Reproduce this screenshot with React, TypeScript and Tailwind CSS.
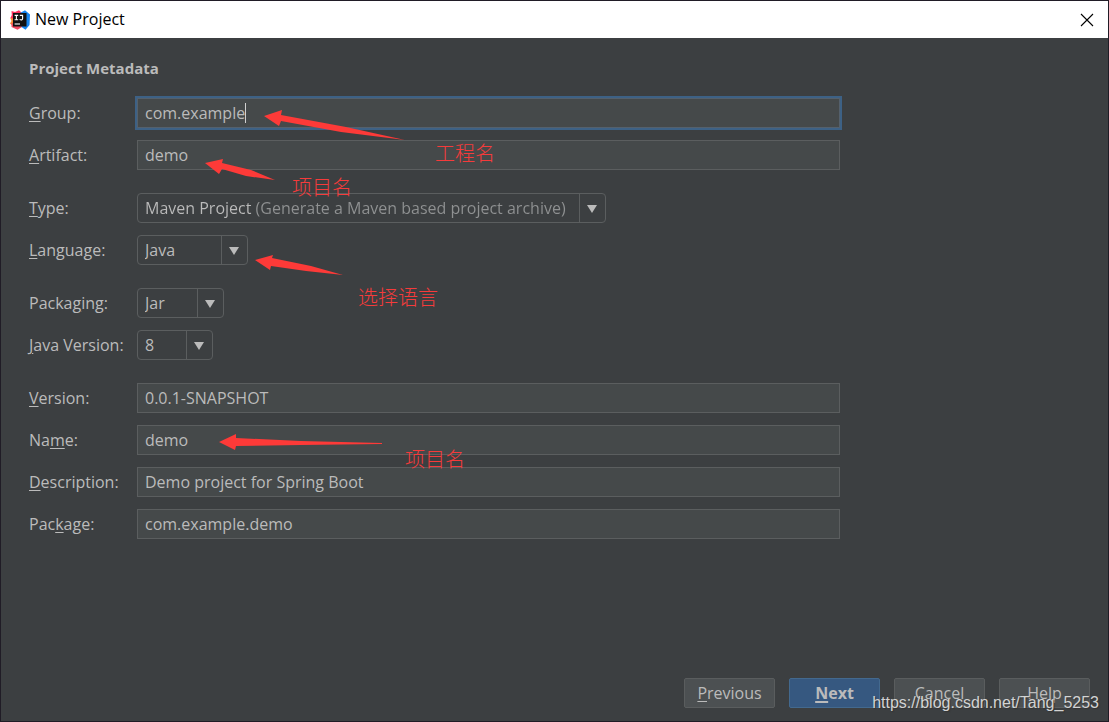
import type { ReactNode } from "react";

type LabelProps = { htmlFor: string; before?: string; mnemonic: string; after: string };

function FieldLabel({ htmlFor, before = "", mnemonic, after }: LabelProps) {
  return (
    <label htmlFor={htmlFor} className="w-[108px] shrink-0 whitespace-nowrap">
      {before}
      <span className="underline decoration-1 underline-offset-2">{mnemonic}</span>
      {after}
    </label>
  );
}

function Row({ children }: { children: ReactNode }) {
  return <div className="flex h-[30px] items-center">{children}</div>;
}

function TextField({ id, value, focused = false }: { id: string; value: string; focused?: boolean }) {
  return (
    <input
      id={id}
      type="text"
      defaultValue={value}
      spellCheck={false}
      className={
        focused
          ? "block h-[30px] w-full min-w-0 border border-[#54606c] bg-[#45494a] px-[7px] pb-px outline-2 outline-[#3d6185]"
          : "block h-[30px] w-full min-w-0 border border-[#5b5e5f] bg-[#45494a] px-[7px] pb-px outline-none focus:outline-2 focus:outline-[#3d6185]"
      }
    />
  );
}

type SelectProps = { id: string; options: string[]; width: string; tone?: string };

function SelectField({ id, options, width, tone = "text-[#bbbbbb]" }: SelectProps) {
  return (
    <div className={`grid h-[30px] rounded border border-[#5b5e5f] ${width}`}>
      <select
        id={id}
        className={`col-start-1 row-start-1 w-full appearance-none pr-[26px] pb-px pl-[7px] outline-none ${tone}`}
      >
        {options.map((option) => (
          <option key={option} className="bg-[#3c3f41] text-[#bbbbbb]">
            {option}
          </option>
        ))}
      </select>
      <span className="pointer-events-none col-start-1 row-start-1 flex w-[26px] items-center justify-center justify-self-end border-l border-[#5b5e5f] pt-[2px] pr-[2px]">
        <svg width="10" height="8" viewBox="0 0 10 8" aria-hidden="true">
          <path d="M0 0H10L5 8Z" fill="#bbbbbb" />
        </svg>
      </span>
    </div>
  );
}

function IdeaLogo() {
  return (
    <svg width="20" height="20" viewBox="0 0 20 20" aria-hidden="true">
      <path d="M0.3 8 3 6 5 12 3 16 0 13.5 1.5 11Z" fill="#fc8a32" />
      <path d="M1.5 1 5 2 9 0.3 12 3 5 9 0.5 8 1.8 5Z" fill="#fe315d" />
      <path d="M10 3 15 0.3 20 4.5 19.5 15 15.5 19.7 10 16Z" fill="#1684ee" />
      <path d="M1.5 13 9 14 12 17 7.5 19.8 1.5 17Z" fill="#f0485f" />
      <rect x="3" y="3" width="13.5" height="13.5" fill="#111111" />
      <path
        d="M4.6 5.4H8.2M6.4 5.4V9.8M4.6 9.8H8.2M9.8 5.4H12.6V8.4C12.6 9.6 11.6 10.1 10.6 9.8L9.6 9.4"
        stroke="#ffffff"
        strokeWidth="1.1"
        fill="none"
      />
      <path d="M4.6 14H10" stroke="#ffffff" strokeWidth="1.1" />
    </svg>
  );
}

function FooterButton({ children, primary = false }: { children: ReactNode; primary?: boolean }) {
  return (
    <button
      type="button"
      className={
        primary
          ? "h-[30px] w-[91px] rounded-xs border border-[#43698e] bg-[#365880] font-bold"
          : "h-[30px] w-[91px] rounded-xs border border-[#5a5d5e] bg-[#4c5052]"
      }
    >
      {children}
    </button>
  );
}

const notes = [
  { text: "工程名", place: "left-[434px] top-[101px]" },
  { text: "项目名", place: "left-[291px] top-[135px]" },
  { text: "选择语言", place: "left-[357px] top-[245px]" },
  { text: "项目名", place: "left-[404px] top-[407px]" },
];

function Annotations() {
  return (
    <div className="pointer-events-none absolute inset-0 overflow-hidden">
      <svg className="absolute top-0 left-0" width="600" height="480" viewBox="0 0 600 480" aria-hidden="true">
        <g fill="#fd3a38">
          <path d="M263 78 281 72 280 77 345 89 404 102 340 94 280 83 278 88Z" />
          <path d="M204 125 222 121 221 125 250 132 274 142 245 138 221 131 218 136Z" />
          <path d="M254 222 272 217 271 220 310 228 342 237 305 233 270 228 269 232Z" />
          <path d="M218 404 235 396 235 400 300 403 381 405 381 406 300 407 235 408 234 412Z" />
        </g>
      </svg>
      {notes.map((note) => (
        <span
          key={note.place}
          className={`absolute font-['Noto_Sans_CJK_SC',sans-serif] text-[20px] leading-7 font-light whitespace-nowrap text-[#f63b3b] ${note.place}`}
        >
          {note.text}
        </span>
      ))}
    </div>
  );
}

export default function App() {
  return (
    <div className="flex min-h-screen flex-col border border-[#201c26] bg-[#3c3f41] font-['Open_Sans','Noto_Sans',sans-serif] text-[16px] leading-5 text-[#bbbbbb]">
      <header className="flex h-[37px] items-center bg-white pr-[14px] pl-[9px] text-black">
        <IdeaLogo />
        <h1 className="ml-[5px] flex-1 pb-px">New Project</h1>
        <button type="button" aria-label="Close">
          <svg width="14" height="14" viewBox="0 0 14 14" aria-hidden="true">
            <path d="M1 1 13 13M13 1 1 13" stroke="#000000" strokeWidth="1.1" />
          </svg>
        </button>
      </header>

      <main className="relative flex flex-1 flex-col px-[28px] pt-[20px]">
        <h2 className="text-[15px] leading-5 font-bold">Project Metadata</h2>

        <form className="mt-[20px] flex w-full max-w-[811px] flex-col gap-[23px]">
          <div className="flex flex-col gap-3">
            <Row>
              <FieldLabel htmlFor="group" mnemonic="G" after="roup:" />
              <div className="relative flex-1">
                <TextField id="group" value="com.example" focused />
                <span className="absolute top-[5px] left-[108px] h-5 w-px bg-[#d0d0d0]" />
              </div>
            </Row>
            <Row>
              <FieldLabel htmlFor="artifact" mnemonic="A" after="rtifact:" />
              <TextField id="artifact" value="demo" />
            </Row>
          </div>

          <div className="flex flex-col gap-3">
            <Row>
              <FieldLabel htmlFor="type" mnemonic="T" after="ype:" />
              <SelectField
                id="type"
                width="w-[469px]"
                tone="bg-[linear-gradient(90deg,#bbbbbb_116px,#8f9192_116px)] bg-clip-text text-transparent"
                options={["Maven Project (Generate a Maven based project archive)"]}
              />
            </Row>
            <Row>
              <FieldLabel htmlFor="language" mnemonic="L" after="anguage:" />
              <SelectField id="language" width="w-[111px]" options={["Java"]} />
            </Row>
          </div>

          <div className="flex flex-col gap-3">
            <Row>
              <FieldLabel htmlFor="packaging" before="Packa" mnemonic="g" after="ing:" />
              <SelectField id="packaging" width="w-[87px]" options={["Jar"]} />
            </Row>
            <Row>
              <FieldLabel htmlFor="java-version" mnemonic="J" after="ava Version:" />
              <SelectField id="java-version" width="w-[76px]" options={["8"]} />
            </Row>
          </div>

          <div className="flex flex-col gap-3">
            <Row>
              <FieldLabel htmlFor="version" mnemonic="V" after="ersion:" />
              <TextField id="version" value="0.0.1-SNAPSHOT" />
            </Row>
            <Row>
              <FieldLabel htmlFor="name" before="Na" mnemonic="m" after="e:" />
              <TextField id="name" value="demo" />
            </Row>
            <Row>
              <FieldLabel htmlFor="description" mnemonic="D" after="escription:" />
              <TextField id="description" value="Demo project for Spring Boot" />
            </Row>
            <Row>
              <FieldLabel htmlFor="package" before="Pac" mnemonic="k" after="age:" />
              <TextField id="package" value="com.example.demo" />
            </Row>
          </div>
        </form>
        <Annotations />
      </main>

      <footer className="relative flex justify-end gap-[14px] pr-[18px] pb-[13px]">
        <FooterButton>
          <span className="underline decoration-1 underline-offset-2">P</span>revious
        </FooterButton>
        <FooterButton primary>
          <span className="underline decoration-2 underline-offset-2">N</span>ext
        </FooterButton>
        <FooterButton>Cancel</FooterButton>
        <FooterButton>Help</FooterButton>
        <span className="pointer-events-none absolute right-[9px] bottom-[8px] font-['Liberation_Sans',sans-serif] text-[16px] text-[#d2d3d3] [text-shadow:1px_1px_1px_#333333]">
          https://blog.csdn.net/Tang_5253
        </span>
      </footer>
    </div>
  );
}
